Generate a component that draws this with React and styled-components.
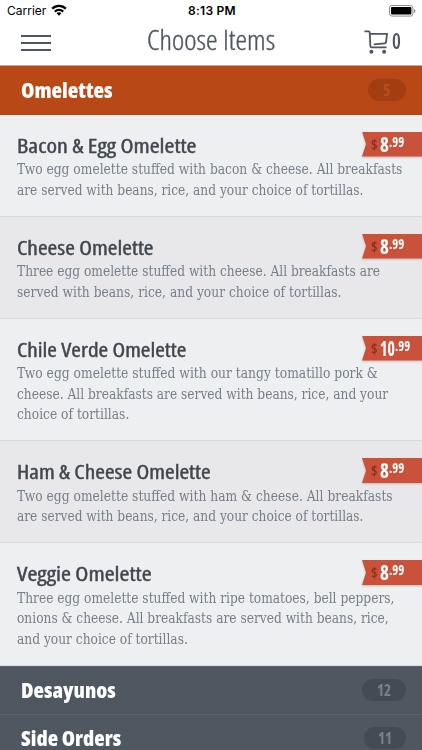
import React, { useLayoutEffect, useRef, useState } from "react";
import styled, { createGlobalStyle } from "styled-components";

const items = [
  {
    name: "Bacon & Egg Omelette",
    width: 179,
    price: ["8", "99"],
    lines: [
      ["Two egg omelette stuffed with bacon & cheese. All breakfasts", 386],
      ["are served with beans, rice, and your choice of tortillas.", 347],
    ],
  },
  {
    name: "Cheese Omelette",
    width: 136,
    price: ["8", "99"],
    lines: [
      ["Three egg omelette stuffed with cheese. All breakfasts are", 364],
      ["served with beans, rice, and your choice of tortillas.", 325],
    ],
  },
  {
    name: "Chile Verde Omelette",
    width: 169,
    price: ["10", "99"],
    lines: [
      ["Two egg omelette stuffed with our tangy tomatillo pork &", 362],
      ["cheese. All breakfasts are served with beans, rice, and your", 372],
      ["choice of tortillas.", 113],
    ],
  },
  {
    name: "Ham & Cheese Omelette",
    width: 194,
    price: ["8", "99"],
    lines: [
      ["Two egg omelette stuffed with ham & cheese. All breakfasts", 377],
      ["are served with beans, rice, and your choice of tortillas.", 347],
    ],
  },
  {
    name: "Veggie Omelette",
    width: 135,
    price: ["8", "99"],
    lines: [
      ["Three egg omelette stuffed with ripe tomatoes, bell peppers,", 378],
      ["onions & cheese. All breakfasts are served with beans, rice,", 373],
      ["and your choice of tortillas.", 172],
    ],
  },
];

// Condenses a run of text horizontally to the given width.
const Fit = ({ width, children }) => {
  const ref = useRef(null);
  const [scale, setScale] = useState(1);
  useLayoutEffect(() => {
    setScale(width / ref.current.offsetWidth);
  }, [width, children]);
  return (
    <FitBox $width={width}>
      <FitText ref={ref} style={{ transform: `scaleX(${scale})` }}>
        {children}
      </FitText>
    </FitBox>
  );
};

const Category = ({ name, width, count, badge, active }) => (
  <CategoryBar $active={active}>
    <Fit width={width}>{name}</Fit>
    <Count $active={active} $width={badge}>
      <Fit width={count.length > 1 ? 14 : 8}>{count}</Fit>
    </Count>
  </CategoryBar>
);

const App = () => (
  <>
    <GlobalStyle />
    <Screen>
      <StatusBar>
        <Carrier>
          Carrier
          <svg width="16" height="12" viewBox="0 0 16 12">
            <g fill="none" stroke="#000" strokeWidth="2.2">
              <path d="M1.2 4.6a9.6 9.6 0 0 1 13.6 0" />
              <path d="M3.8 7.6a6 6 0 0 1 8.4 0" />
            </g>
            <path d="M5.6 9.3a3.5 3.5 0 0 1 4.8 0L8 11.7z" />
          </svg>
        </Carrier>
        <Time>8:13 PM</Time>
        <Battery>
          <svg width="28" height="12" viewBox="0 0 28 12">
            <rect x=".5" y=".5" width="23.4" height="10.6" rx="2.5" fill="none" stroke="#8d8d8d" />
            <rect x="2" y="2" width="20.4" height="7.6" rx="1" />
            <path d="M25 4v4q1.5-.6 1.5-2T25 4" fill="#8d8d8d" />
          </svg>
        </Battery>
      </StatusBar>
      <Header>
        <MenuButton aria-label="Menu">
          <span />
          <span />
          <span />
        </MenuButton>
        <Heading>
          <Fit width={128}>Choose Items</Fit>
        </Heading>
        <Cart>
          <svg width="25" height="25" viewBox="0 0 25 25" fill="none" stroke="#4e565f" strokeWidth="1.8">
            <path d="M.4 1.4h4.2q1 0 1.1 1L6.4 16.2q.1 1.2 1.2 1.2h15" />
            <path d="M5.8 3.8h17.2l-.9 8.2q-.2 1.3-1.4 1.4L9.8 14.3" />
            <circle cx="7.4" cy="21.7" r="2" fill="#4e565f" stroke="none" />
            <circle cx="20.1" cy="21.7" r="2" fill="#4e565f" stroke="none" />
          </svg>
          <Fit width={9}>0</Fit>
        </Cart>
      </Header>
      <Category name="Omelettes" width={92} count="5" badge={38} active />
      {items.map(({ name, width, price, lines }, idx) => (
        <Item key={name} $alt={idx % 2 === 1}>
          <ItemTop>
            <ItemName>
              <Fit width={width}>{name}</Fit>
            </ItemName>
            <TagShadow>
              <PriceTag>
                <Dollar>
                  <Fit width={7}>$</Fit>
                </Dollar>
                <Amount>
                  <Fit width={price[0].length > 1 ? 15 : 9}>{price[0]}</Fit>
                </Amount>
                <Cents>
                  <Fit width={15}>.{price[1]}</Fit>
                </Cents>
              </PriceTag>
            </TagShadow>
          </ItemTop>
          <Description>
            {lines.map(([text, lineWidth]) => (
              <Fit key={text} width={lineWidth - 1}>
                {text}
              </Fit>
            ))}
          </Description>
        </Item>
      ))}
      <Category name="Desayunos" width={95} count="12" badge={44} />
      <Category name="Side Orders" width={100} count="11" badge={42} />
    </Screen>
  </>
);

export default App;

const GlobalStyle = createGlobalStyle`
  * {
    box-sizing: border-box;
  }
  body {
    margin: 0;
    overflow: hidden;
  }
`;
const FitBox = styled.span`
  display: block;
  flex: none;
  width: ${({ $width }) => $width}px;
  white-space: nowrap;
`;
const FitText = styled.span`
  display: inline-block;
  transform-origin: 0 50%;
`;
const Screen = styled.div`
  width: 422px;
  height: 750px;
  overflow: hidden;
  background: #fff;
  font-family: "Open Sans", "Noto Sans", sans-serif;
  font-stretch: 75%;
`;
const StatusBar = styled.div`
  display: grid;
  grid-template-columns: 1fr auto 1fr;
  align-items: center;
  height: 22px;
  padding: 0 5px 0 7px;
  color: #000;
  font: 12px/22px Inter, "Liberation Sans", sans-serif;
`;
const Carrier = styled.div`
  display: flex;
  align-items: center;
  gap: 5px;
  svg {
    margin-top: -2px;
  }
`;
const Time = styled.div`
  font-weight: 600;
  letter-spacing: 0.25px;
`;
const Battery = styled.div`
  display: flex;
  justify-content: flex-end;
`;
const Header = styled.header`
  display: grid;
  grid-template-columns: 125px 129px 1fr;
  height: 44px;
  padding: 0 21px 0 21px;
  border-bottom: 1px solid #c9a595;
  color: #4e565f;
`;
const MenuButton = styled.button`
  display: flex;
  flex-direction: column;
  gap: 5px;
  width: 30px;
  margin-top: 13px;
  padding: 0;
  border: 0;
  background: none;
  span {
    height: 2px;
    background: #4e565f;
  }
`;
const Heading = styled.h1`
  margin: 0;
  padding-left: 1px;
  font-size: 27px;
  font-weight: 300;
  line-height: 35px;
  -webkit-text-stroke: 0.35px #4e565f;
`;
const Cart = styled.div`
  display: flex;
  justify-content: flex-end;
  gap: 3px;
  font-size: 22px;
  font-weight: 600;
  line-height: 37px;
  svg {
    margin-top: 8px;
  }
`;
const CategoryBar = styled.div`
  display: flex;
  align-items: center;
  justify-content: space-between;
  height: ${({ $active }) => ($active ? "48.5px" : "48px")};
  padding: 0 16px 0 21px;
  border-top: ${({ $active }) => ($active ? "0" : "1px solid #5a626b")};
  background: ${({ $active }) => ($active ? "#b94817" : "#4f5760")};
  color: #fff;
  font-size: 21px;
  font-weight: 800;
  line-height: 22px;
`;
const Count = styled.div`
  display: flex;
  justify-content: center;
  width: ${({ $width }) => $width}px;
  height: 22px;
  border-radius: 11px;
  background: ${({ $active }) => ($active ? "#a33d14" : "#444b54")};
  color: ${({ $active }) => ($active ? "#bd4d1d" : "#7a828c")};
  font-size: 16px;
  font-weight: 700;
  line-height: 22px;
`;
const Item = styled.article`
  padding: 17px 0 15.5px 16.5px;
  border-bottom: 1px solid #d9dadd;
  background: ${({ $alt }) => ($alt ? "#e8e8ea" : "#eeeff1")};
`;
const ItemTop = styled.div`
  display: flex;
  justify-content: space-between;
  height: 27px;
  margin-bottom: 0.5px;
`;
const ItemName = styled.h2`
  margin: 0;
  color: #40464d;
  font-size: 20.5px;
  font-weight: 500;
  line-height: 26px;
  -webkit-text-stroke: 0.4px #40464d;
`;
const TagShadow = styled.div`
  filter: drop-shadow(0 1px 1px rgba(120, 60, 50, 0.3));
`;
const PriceTag = styled.div`
  display: flex;
  width: 60px;
  height: 25px;
  padding-left: 9px;
  background: #cb523a;
  clip-path: polygon(0 0, 100% 0, 100% 100%, 0 100%, 4px 50%);
  color: #fff;
  font-weight: 700;
`;
const Dollar = styled.span`
  margin-right: 2px;
  color: #8b3022;
  font-size: 14px;
  line-height: 25px;
`;
const Amount = styled.span`
  font-size: 21px;
  line-height: 25px;
`;
const Cents = styled.span`
  font-size: 13.5px;
  line-height: 20px;
`;
const Description = styled.div`
  color: #767e89;
  font-family: "DejaVu Serif Condensed", "DejaVu Serif", serif;
  font-size: 14px;
  line-height: 20.5px;
`;
